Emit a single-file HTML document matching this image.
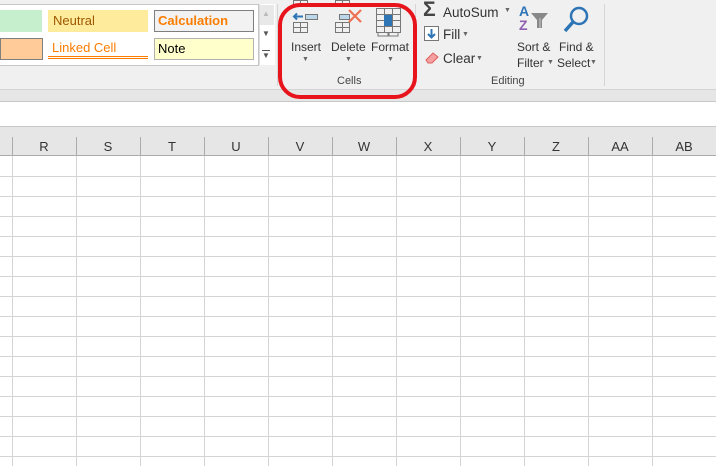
<!DOCTYPE html>
<html><head><style>
body{margin:0;width:716px;height:466px;overflow:hidden;background:#fff;font-family:"Liberation Sans",Arial,sans-serif;position:relative}
.a{position:absolute}
.t{position:absolute;font-size:12px;color:#333;white-space:nowrap}
</style></head><body>
<div class="a" style="left:0;top:0;width:716px;height:90px;background:#f0f0f0"></div>
<div class="a" style="left:0;top:89px;width:716px;height:1px;background:#d4d4d4"></div>
<div class="a" style="left:0;top:90px;width:716px;height:12px;background:#e6e6e6"></div>
<div class="a" style="left:0;top:101px;width:716px;height:1px;background:#c8c8c8"></div>
<div class="a" style="left:0;top:126px;width:716px;height:1px;background:#c8c8c8"></div>
<div class="a" style="left:0;top:127px;width:716px;height:29px;background:#e6e6e6"></div>
<div class="a" style="left:0;top:155px;width:716px;height:1px;background:#ababab"></div>
<!-- gallery -->
<div class="a" style="left:-2px;top:4px;width:259px;height:60px;background:#fff;border:1px solid #c6c6c6"></div>
<div class="a" style="left:259px;top:4px;width:15px;height:61px;background:#fff;border-left:1px solid #ddd"></div>
<div class="a" style="left:260px;top:5px;width:14px;height:20px;background:#e8e8e8"></div>
<div class="t" style="left:262px;top:9px;font-size:8px;color:#bbb">▲</div>
<div class="t" style="left:262px;top:29px;font-size:8px;color:#555">▼</div>
<div class="a" style="left:262px;top:50px;width:8px;height:1px;background:#555"></div>
<div class="t" style="left:262px;top:51px;font-size:8px;color:#555">▼</div>
<div class="a" style="left:0;top:10px;width:42px;height:22px;background:#c6efce"></div>
<div class="a" style="left:0;top:38px;width:41px;height:20px;background:#ffcc99;border:1px solid #7f7f7f"></div>
<div class="a" style="left:48px;top:10px;width:100px;height:22px;background:#ffeb9c"></div>
<div class="t" style="left:53px;top:13px;font-size:13px;color:#9c5700">Neutral</div>
<div class="a" style="left:154px;top:10px;width:98px;height:20px;background:#f2f2f2;border:1px solid #7f7f7f"></div>
<div class="t" style="left:158px;top:13px;font-size:13px;color:#fa7d00;font-weight:bold">Calculation</div>
<div class="t" style="left:52px;top:40px;font-size:13px;color:#fa7d00">Linked Cell</div>
<div class="a" style="left:48px;top:56px;width:100px;height:3px;border-top:1px solid #fa7d00;border-bottom:1px solid #fa7d00;box-sizing:border-box"></div>
<div class="a" style="left:154px;top:38px;width:98px;height:20px;background:#ffffcc;border:1px solid #b2b2b2"></div>
<div class="t" style="left:158px;top:41px;font-size:13px;color:#000">Note</div>
<!-- separators -->
<div class="a" style="left:277px;top:4px;width:1px;height:82px;background:#d6d6d6"></div>
<div class="a" style="left:415px;top:4px;width:1px;height:82px;background:#d6d6d6"></div>
<div class="a" style="left:604px;top:4px;width:1px;height:82px;background:#d6d6d6"></div>
<!-- icons -->
<svg class="a" style="left:280px;top:0" width="140" height="40">
<g fill="none" stroke="#777" stroke-width="1">
<rect x="13.5" y="0.5" width="14" height="6"/><line x1="20.5" y1="0" x2="20.5" y2="6"/>
<rect x="13.5" y="22.5" width="14" height="10"/><line x1="20.5" y1="22" x2="20.5" y2="32"/><line x1="13" y1="27.5" x2="28" y2="27.5"/>
<rect x="55.5" y="0.5" width="14" height="6"/><line x1="62.5" y1="0" x2="62.5" y2="6"/>
<rect x="55.5" y="22.5" width="14" height="10"/><line x1="62.5" y1="22" x2="62.5" y2="32"/><line x1="55" y1="27.5" x2="70" y2="27.5"/>
<rect x="96.5" y="8.5" width="24" height="24"/>
<line x1="104.5" y1="8" x2="104.5" y2="32"/><line x1="112.5" y1="8" x2="112.5" y2="32"/>
<line x1="96" y1="14.5" x2="121" y2="14.5"/><line x1="96" y1="20.5" x2="121" y2="20.5"/><line x1="96" y1="26.5" x2="121" y2="26.5"/>
</g>
<rect x="25.5" y="14.5" width="12" height="5" fill="#bcd6ea" stroke="#777"/>
<path d="M14 16.5h9M17 13.5l-3 3 3 3" stroke="#2e75b6" stroke-width="2" fill="none"/>
<rect x="59.5" y="14.5" width="10" height="5" fill="#bcd6ea" stroke="#777"/>
<path d="M69 10l12 12M81 10l-12 12" stroke="#ee7050" stroke-width="2.2"/>
<rect x="104" y="15" width="8" height="11" fill="#2e75b6"/>
<path d="M97 6V4h22v2M101 4l-3 1M115 4l3 1" stroke="#2e75b6" fill="none"/>
<path d="M98 33v3h10v-3M109 33v3h9v-3" stroke="#777" fill="none"/>
</svg>
<div class="t" style="left:291px;top:40px">Insert</div>
<div class="t" style="left:331px;top:40px">Delete</div>
<div class="t" style="left:371px;top:40px">Format</div>
<div class="t" style="left:302px;top:56px;font-size:7px;color:#666">▼</div>
<div class="t" style="left:345px;top:56px;font-size:7px;color:#666">▼</div>
<div class="t" style="left:387px;top:56px;font-size:7px;color:#666">▼</div>
<div class="t" style="left:337px;top:75px;font-size:11px;color:#444">Cells</div>
<div class="a" style="left:278px;top:3px;width:139px;height:96px;border:4px solid #e8141c;border-radius:22px;box-sizing:border-box"></div>
<!-- editing -->
<div class="t" style="left:423px;top:-2px;font-size:21px;color:#444;font-weight:bold">Σ</div>
<div class="t" style="left:443px;top:5px;font-size:13.5px">AutoSum</div>
<div class="t" style="left:504px;top:7px;font-size:7px;color:#666">▼</div>
<svg class="a" style="left:424px;top:26px" width="16" height="16"><rect x="0.5" y="0.5" width="14" height="14" fill="#fff" stroke="#777"/><path d="M7.5 3v8M4 8l3.5 3.5L11 8" stroke="#2e75b6" stroke-width="2" fill="none"/></svg>
<div class="t" style="left:443px;top:27px;font-size:13.5px">Fill</div>
<div class="t" style="left:462px;top:31px;font-size:7px;color:#666">▼</div>
<svg class="a" style="left:424px;top:50px" width="16" height="14"><path d="M2 10l7-7 5 4-6 6H4z" fill="#f4a0a0" stroke="#e06060"/></svg>
<div class="t" style="left:443px;top:51px;font-size:13.5px">Clear</div>
<div class="t" style="left:476px;top:55px;font-size:7px;color:#666">▼</div>
<div class="t" style="left:519px;top:3px;font-size:14px;font-weight:bold;color:#2e75b6">A</div>
<div class="t" style="left:519px;top:17px;font-size:14px;font-weight:bold;color:#8f5fb0">Z</div>
<svg class="a" style="left:530px;top:12px" width="20" height="18"><path d="M1 1h17l-6 7v8h-5V8z" fill="#888"/><path d="M10 6v10" stroke="#ccc"/></svg>
<svg class="a" style="left:563px;top:4px" width="30" height="32"><circle cx="16" cy="12" r="8" fill="none" stroke="#2e75b6" stroke-width="2.5"/><path d="M10 18l-8 9" stroke="#2e75b6" stroke-width="3.5"/></svg>
<div class="t" style="left:517px;top:40px">Sort &amp;</div>
<div class="t" style="left:517px;top:56px">Filter</div>
<div class="t" style="left:547px;top:59px;font-size:7px;color:#666">▼</div>
<div class="t" style="left:559px;top:40px">Find &amp;</div>
<div class="t" style="left:557px;top:56px">Select</div>
<div class="t" style="left:590px;top:59px;font-size:7px;color:#666">▼</div>
<div class="t" style="left:491px;top:75px;font-size:11px;color:#444">Editing</div>
<!-- grid -->
<svg class="a" style="left:0;top:127px" width="716" height="339">
<g stroke="#d4d4d4">
<line x1="0" y1="49.5" x2="716" y2="49.5"/><line x1="0" y1="69.5" x2="716" y2="69.5"/><line x1="0" y1="89.5" x2="716" y2="89.5"/><line x1="0" y1="109.5" x2="716" y2="109.5"/><line x1="0" y1="129.5" x2="716" y2="129.5"/><line x1="0" y1="149.5" x2="716" y2="149.5"/><line x1="0" y1="169.5" x2="716" y2="169.5"/><line x1="0" y1="189.5" x2="716" y2="189.5"/><line x1="0" y1="209.5" x2="716" y2="209.5"/><line x1="0" y1="229.5" x2="716" y2="229.5"/><line x1="0" y1="249.5" x2="716" y2="249.5"/><line x1="0" y1="269.5" x2="716" y2="269.5"/><line x1="0" y1="289.5" x2="716" y2="289.5"/><line x1="0" y1="309.5" x2="716" y2="309.5"/><line x1="0" y1="329.5" x2="716" y2="329.5"/>
<line x1="12.5" y1="29" x2="12.5" y2="339"/><line x1="76.5" y1="29" x2="76.5" y2="339"/><line x1="140.5" y1="29" x2="140.5" y2="339"/><line x1="204.5" y1="29" x2="204.5" y2="339"/><line x1="268.5" y1="29" x2="268.5" y2="339"/><line x1="332.5" y1="29" x2="332.5" y2="339"/><line x1="396.5" y1="29" x2="396.5" y2="339"/><line x1="460.5" y1="29" x2="460.5" y2="339"/><line x1="524.5" y1="29" x2="524.5" y2="339"/><line x1="588.5" y1="29" x2="588.5" y2="339"/><line x1="652.5" y1="29" x2="652.5" y2="339"/>
</g>
<g stroke="#ababab">
<line x1="12.5" y1="10" x2="12.5" y2="29"/><line x1="76.5" y1="10" x2="76.5" y2="29"/><line x1="140.5" y1="10" x2="140.5" y2="29"/><line x1="204.5" y1="10" x2="204.5" y2="29"/><line x1="268.5" y1="10" x2="268.5" y2="29"/><line x1="332.5" y1="10" x2="332.5" y2="29"/><line x1="396.5" y1="10" x2="396.5" y2="29"/><line x1="460.5" y1="10" x2="460.5" y2="29"/><line x1="524.5" y1="10" x2="524.5" y2="29"/><line x1="588.5" y1="10" x2="588.5" y2="29"/><line x1="652.5" y1="10" x2="652.5" y2="29"/>
</g>
<g font-family="Liberation Sans" font-size="13" fill="#333" text-anchor="middle">
<text x="44" y="24">R</text><text x="108" y="24">S</text><text x="172" y="24">T</text><text x="236" y="24">U</text><text x="300" y="24">V</text><text x="364" y="24">W</text><text x="428" y="24">X</text><text x="492" y="24">Y</text><text x="556" y="24">Z</text><text x="620" y="24">AA</text><text x="684" y="24">AB</text>
</g>
</svg>
</body></html>
